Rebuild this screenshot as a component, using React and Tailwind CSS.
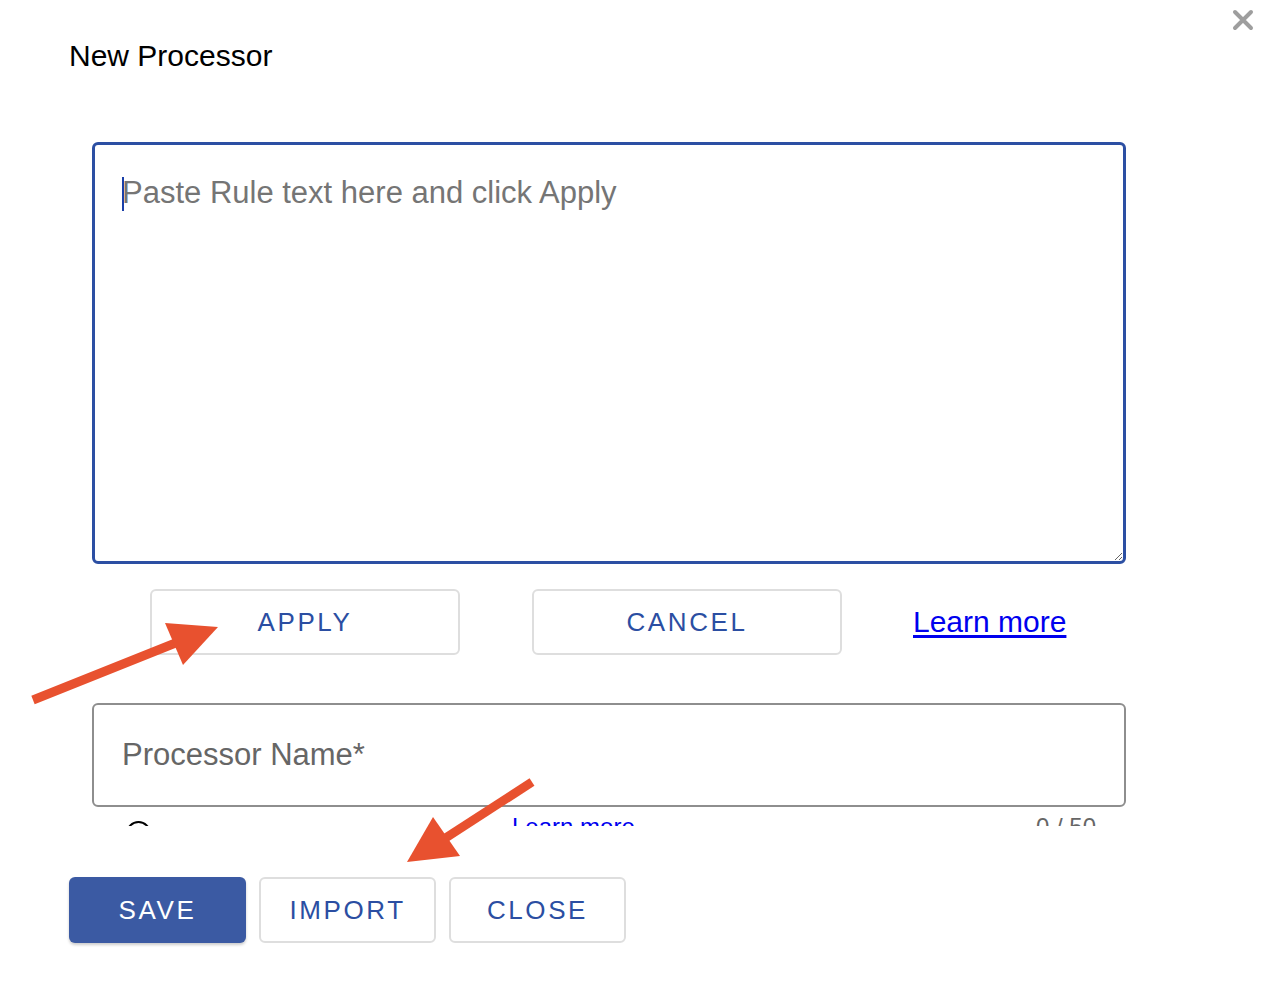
import { useState } from 'react';

const outlineBtn =
  'h-[66px] rounded-[6px] border-2 border-[#dedede] bg-white text-[#2b4ea2] text-[26px] tracking-[2.6px] flex items-center justify-center';

export default function App() {
  const [rule, setRule] = useState('');
  const [name, setName] = useState('');

  return (
    <div className="relative w-[1280px] h-[992px] bg-white overflow-hidden font-['Liberation_Sans',Arial,sans-serif]">
      {/* close (x) */}
      <button className="absolute left-[1231px] top-[8px] w-[24px] h-[24px] flex items-center justify-center" aria-label="Close">
        <svg width="22" height="22" viewBox="0 0 22 22">
          <path d="M3 3 L19 19 M19 3 L3 19" stroke="#9e9e9e" strokeWidth="4" strokeLinecap="round" />
        </svg>
      </button>

      <h1 className="pt-[38px] pl-[69px] text-[30px] leading-[36px] text-black font-normal">New Processor</h1>

      <div className="mt-[68px] ml-[92px] w-[1034px] h-[684px] overflow-hidden flex flex-col">
        <div className="relative h-[422px] shrink-0">
          <textarea
            value={rule}
            onChange={(e) => setRule(e.target.value)}
            placeholder="Paste Rule text here and click Apply"
            className="block w-full h-full rounded-[6px] border-[3px] border-[#2c4fa3] bg-white pl-[27px] pr-[20px] pt-[30px] text-[31px] leading-[36px] text-black placeholder:text-[#757575] outline-none resize"
          />
          <span className="absolute left-[30px] top-[35px] w-[2px] h-[34px] bg-[#1a3fa8]" />
        </div>

        <div className="mt-[25px] pl-[58px] flex items-center shrink-0">
          <button className={`${outlineBtn} w-[310px]`}>APPLY</button>
          <button className={`${outlineBtn} w-[310px] ml-[72px]`}>CANCEL</button>
          <a href="#" className="ml-[71px] text-[30px] leading-[36px] text-[#0000ee] underline underline-offset-[3px]">
            Learn more
          </a>
        </div>

        <div className="mt-[48px] h-[104px] shrink-0 rounded-[6px] border-2 border-[#8e8e8e] flex items-center">
          <input
            value={name}
            onChange={(e) => setName(e.target.value)}
            placeholder="Processor Name*"
            className="w-full bg-transparent pl-[28px] text-[31px] leading-[36px] text-black placeholder:text-[#666666] outline-none"
          />
        </div>

        <div className="mt-[8px] flex items-start shrink-0 text-[24px] leading-[24px]">
          <span className="ml-[34px] mt-[6px] w-[25px] h-[25px] rounded-full border-[2.5px] border-black" />
          <a href="#" className="ml-[361px] text-[#0000ee] underline">Learn more</a>
          <span className="ml-auto mr-[30px] text-[#666666]">0 / 50</span>
        </div>
      </div>

      {/* dialog actions */}
      <div className="mt-[51px] pl-[69px] flex gap-[13px]">
        <button className="w-[177px] h-[66px] rounded-[6px] bg-[#3b5aa3] text-white text-[26px] tracking-[2.6px] shadow-[0_2px_3px_rgba(0,0,0,0.2)] flex items-center justify-center">
          SAVE
        </button>
        <button className={`${outlineBtn} w-[177px]`}>IMPORT</button>
        <button className={`${outlineBtn} w-[177px]`}>CLOSE</button>
      </div>

      {/* annotation arrows */}
      <svg className="absolute inset-0 pointer-events-none" width="1280" height="992" viewBox="0 0 1280 992">
        <line x1="33" y1="700" x2="178" y2="642" stroke="#e8512f" strokeWidth="9" />
        <polygon points="165,623 218,627 183,665" fill="#e8512f" />
        <line x1="532" y1="782" x2="444" y2="839" stroke="#e8512f" strokeWidth="9" />
        <polygon points="433,817 460,856 407,862" fill="#e8512f" />
      </svg>
    </div>
  );
}
